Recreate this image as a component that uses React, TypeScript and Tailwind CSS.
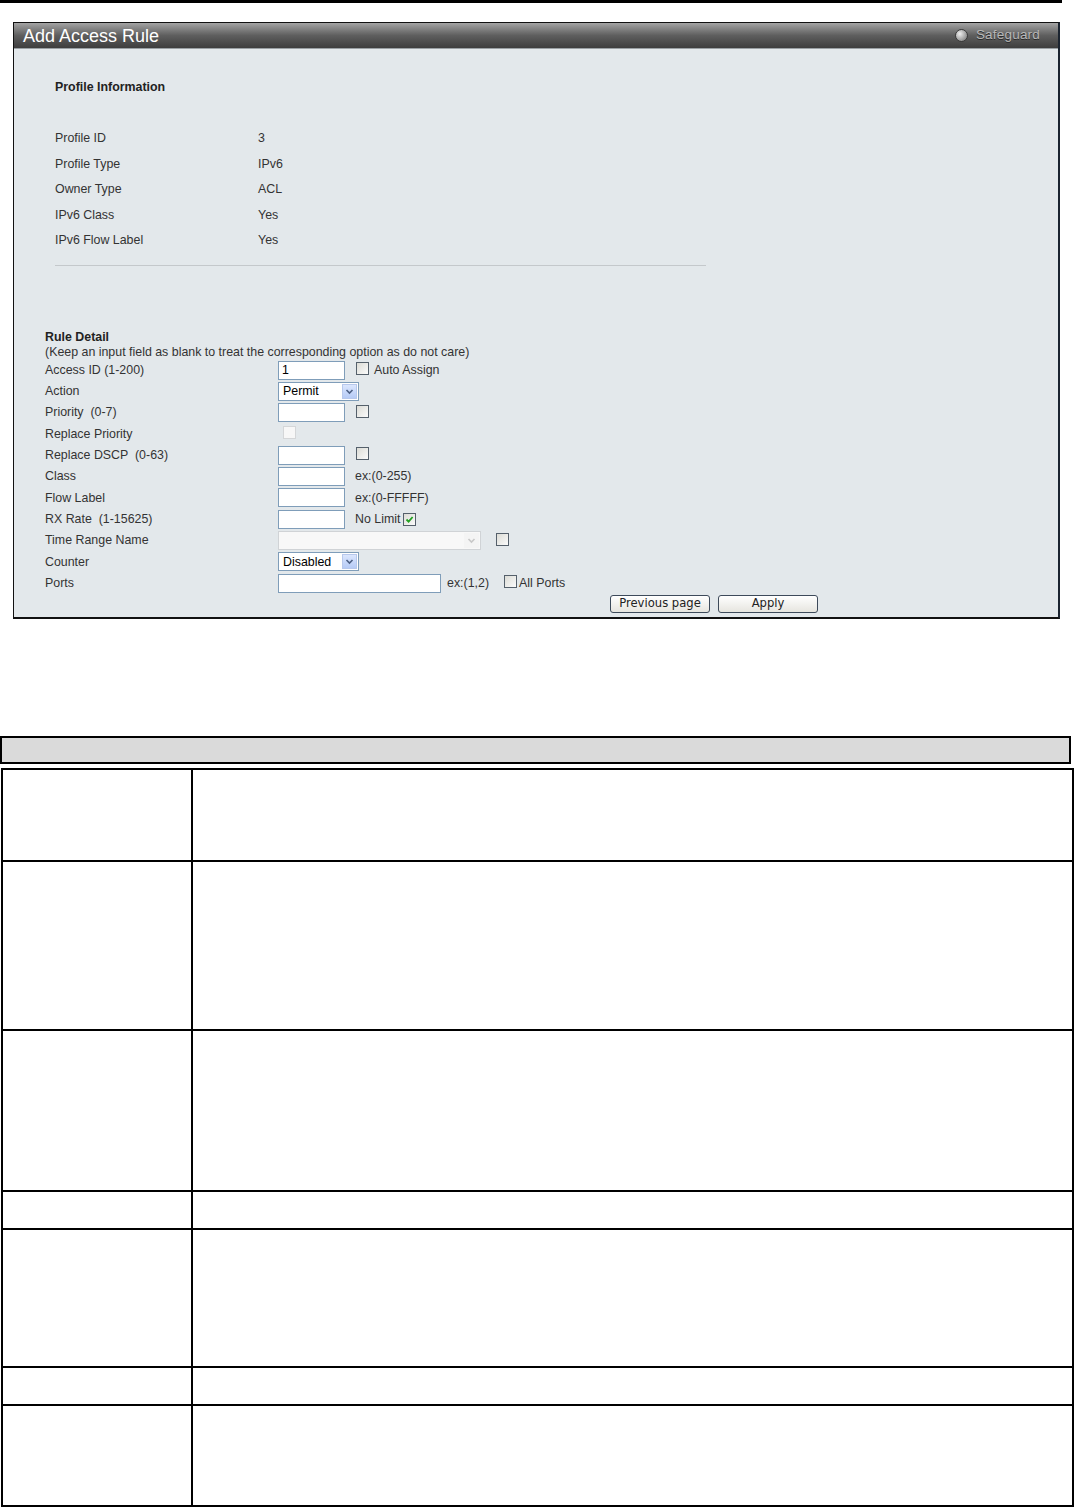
import React from "react";

const profileRows = [
  ["Profile ID", "3"],
  ["Profile Type", "IPv6"],
  ["Owner Type", "ACL"],
  ["IPv6 Class", "Yes"],
  ["IPv6 Flow Label", "Yes"],
];

const tableRows = [92, 169, 161, 38, 138, 38, 101];

function Checkbox({ checked, disabled }: { checked?: boolean; disabled?: boolean }) {
  if (disabled) {
    return <span className="inline-block h-[13px] w-[13px] border border-[#d4d6d8] bg-[#f7f7f7]" />;
  }
  return (
    <span className="inline-flex h-[13px] w-[13px] items-center justify-center border border-[#55606b] bg-gradient-to-br from-[#dcdcd6] to-[#fbfbfb]">
      {checked && (
        <svg width="9" height="9" viewBox="0 0 9 9">
          <path d="M1.5 4.5 L3.6 6.6 L7.6 2" fill="none" stroke="#21a121" strokeWidth="1.8" />
        </svg>
      )}
    </span>
  );
}

function TextInput({ value = "", width = "w-[67px]" }: { value?: string; width?: string }) {
  return (
    <span className={`inline-flex h-[19px] ${width} items-center border border-[#7f9db9] bg-white pl-[3px] text-[12.4px] text-black`}>
      {value}
    </span>
  );
}

function Select({ value, width, disabled }: { value: string; width: string; disabled?: boolean }) {
  return (
    <span
      className={`inline-flex h-[19px] ${width} items-center justify-between border ${
        disabled ? "border-[#d0d3d6] bg-[#f8f8f8]" : "border-[#7f9db9] bg-white"
      } pl-[4px] pr-[1px] text-[12.4px] text-black`}
    >
      <span>{value}</span>
      <span
        className={`inline-flex h-[15px] w-[15px] items-center justify-center ${
          disabled ? "bg-[#f4f4f4]" : "border border-[#b7c8ec] bg-gradient-to-b from-[#dbe6fd] to-[#b6cbf6]"
        }`}
      >
        <svg width="9" height="7" viewBox="0 0 9 7">
          <path
            d="M1.5 2 L4.5 5 L7.5 2"
            fill="none"
            stroke={disabled ? "#c8c8c8" : "#4d6185"}
            strokeWidth="1.6"
          />
        </svg>
      </span>
    </span>
  );
}

function FormRow({ label, children }: { label: string; children?: React.ReactNode }) {
  return (
    <div className="flex h-[21.3px] items-center">
      <span className="w-[233px] shrink-0 whitespace-pre text-[12.4px] text-[#333]">{label}</span>
      <div className="flex items-center">{children}</div>
    </div>
  );
}

function Button({ children }: { children: React.ReactNode }) {
  return (
    <span className="inline-flex h-[18px] w-[100px] items-center justify-center rounded-[3px] border border-[#3d4a5a] bg-gradient-to-b from-[#ffffff] to-[#e6e5df] font-['DejaVu_Sans',Verdana,sans-serif] text-[11.6px] text-[#222]">
      {children}
    </span>
  );
}

export default function App() {
  return (
    <div className="min-h-[1507px] w-[1075px] bg-white font-['Liberation_Sans',Arial,sans-serif]">
      <div className="h-[3px] w-[1062px] bg-black" />

      <section className="ml-[13px] mt-[19px] h-[597px] w-[1047px] border border-b-2 border-r-2 border-[#111] border-r-[#1b2430] bg-[#e3e8eb]">
        <div className="flex h-[26px] items-center justify-between border-b border-[#9aa0a4] bg-gradient-to-b from-[#a4a4a4] via-[#5e5e5e] to-[#3e3e3e] pl-[9px] pr-[18px]">
          <span className="text-[18px] leading-none text-white">Add Access Rule</span>
          <span className="flex items-center gap-[8px]">
            <span className="h-[13px] w-[13px] rounded-full border border-[#3a3a3a] bg-[radial-gradient(circle_at_35%_35%,#eeeeee,#6e6e6e)]" />
            <span className="text-[13.5px] tracking-[0.2px] text-[#b8b8b8] [text-shadow:0_1px_0_#2a2a2a]">Safeguard</span>
          </span>
        </div>

        <div className="pl-[31px]">
          <div className="pl-[10px] pt-[30px]">
            <div className="h-[16px] text-[12.4px] font-bold leading-[16px] text-[#222]">Profile Information</div>
            <div className="mt-[31px]">
              {profileRows.map(([k, v]) => (
                <div key={k} className="flex h-[25.5px] items-center text-[12.4px] text-[#333]">
                  <span className="w-[203px]">{k}</span>
                  <span>{v}</span>
                </div>
              ))}
            </div>
            <div className="mt-[11px] h-[2px] w-[651px] border-t border-[#c4c8cb] border-b-white" />
          </div>

          <div className="mt-[62px]">
            <div className="h-[16px] text-[12.4px] font-bold leading-[16px] text-[#222]">Rule Detail</div>
            <div className="h-[15px] text-[12.4px] leading-[15px] text-[#333]">
              (Keep an input field as blank to treat the corresponding option as do not care)
            </div>
            <FormRow label="Access ID (1-200)">
              <TextInput value="1" />
              <span className="ml-[11px]"><Checkbox /></span>
              <span className="ml-[5px] text-[12.4px] text-[#333]">Auto Assign</span>
            </FormRow>
            <FormRow label="Action">
              <Select value="Permit" width="w-[81px]" />
            </FormRow>
            <FormRow label="Priority  (0-7)">
              <TextInput />
              <span className="ml-[11px]"><Checkbox /></span>
            </FormRow>
            <FormRow label="Replace Priority">
              <span className="ml-[5px]"><Checkbox disabled /></span>
            </FormRow>
            <FormRow label="Replace DSCP  (0-63)">
              <TextInput />
              <span className="ml-[11px]"><Checkbox /></span>
            </FormRow>
            <FormRow label="Class">
              <TextInput />
              <span className="ml-[10px] text-[12.4px] text-[#333]">ex:(0-255)</span>
            </FormRow>
            <FormRow label="Flow Label">
              <TextInput />
              <span className="ml-[10px] text-[12.4px] text-[#333]">ex:(0-FFFFF)</span>
            </FormRow>
            <FormRow label="RX Rate  (1-15625)">
              <TextInput />
              <span className="ml-[10px] text-[12.4px] text-[#333]">No Limit</span>
              <span className="ml-[3px]"><Checkbox checked /></span>
            </FormRow>
            <FormRow label="Time Range Name">
              <Select value="" width="w-[203px]" disabled />
              <span className="ml-[15px]"><Checkbox /></span>
            </FormRow>
            <FormRow label="Counter">
              <Select value="Disabled" width="w-[81px]" />
            </FormRow>
            <FormRow label="Ports">
              <TextInput width="w-[163px]" />
              <span className="ml-[6px] text-[12.4px] text-[#333]">ex:(1,2)</span>
              <span className="ml-[15px]"><Checkbox /></span>
              <span className="ml-[2px] text-[12.4px] text-[#333]">All Ports</span>
            </FormRow>
            <div className="ml-[565px] mt-[1px] flex gap-[8px]">
              <Button>Previous page</Button>
              <Button>Apply</Button>
            </div>
          </div>
        </div>
      </section>

      <div className="mt-[117px] h-[28px] w-[1071px] border-2 border-black bg-[#dadada]" />

      <div className="ml-[1px] mt-[4px] w-[1073px] border-x-2 border-b-2 border-black">
        {tableRows.map((h, i) => (
          <div key={i} className="grid grid-cols-[190px_1fr] border-t-2 border-black" style={{ height: h }}>
            <div className="border-r-2 border-black" />
            <div />
          </div>
        ))}
      </div>
    </div>
  );
}
